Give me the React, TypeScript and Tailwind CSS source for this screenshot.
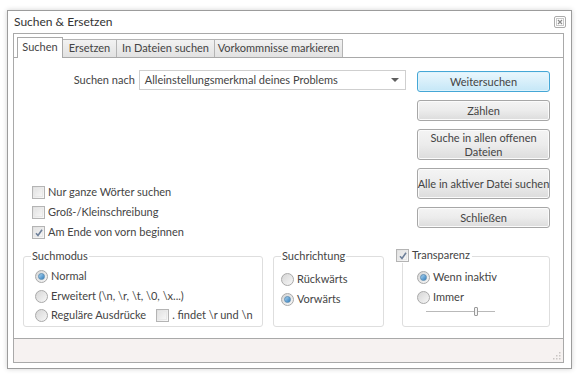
import React from 'react'

const font = { fontFamily: 'Lato, "Liberation Sans", sans-serif' }

function Checkbox({ checked }: { checked?: boolean }) {
  return (
    <span className="relative inline-flex h-[13px] w-[13px] shrink-0 items-center justify-center border border-[#b4b4b4] bg-gradient-to-br from-[#dedede] to-[#fafafa]">
      <span className="h-[9px] w-[9px] border border-[#e8e8e8] bg-gradient-to-br from-[#e4e4e4] to-[#f6f6f6]" />
      {checked && (
        <svg className="absolute left-[1px] top-[1px]" width="10" height="10" viewBox="0 0 10 10">
          <path d="M2 5.2 L4 7.5 L8 1.8" fill="none" stroke="#6d7f99" strokeWidth="1.6" />
        </svg>
      )}
    </span>
  )
}

function Radio({ checked }: { checked?: boolean }) {
  return (
    <span className="inline-flex h-[13px] w-[13px] shrink-0 items-center justify-center rounded-full border border-[#a9a9a9] bg-gradient-to-br from-[#d6d6d6] to-[#f7f7f7]">
      {checked && (
        <span className="h-[7px] w-[7px] rounded-full border border-[#5d8fb5] bg-gradient-to-br from-[#a9d4f0] to-[#2f7fbf]" />
      )}
    </span>
  )
}

function Btn({ children, primary, h }: { children: React.ReactNode; primary?: boolean; h: string }) {
  return (
    <div
      className={`flex w-[133px] items-center justify-center rounded-[3px] border text-center leading-[14px] ${h} ${
        primary
          ? 'border-[#45a7d6] bg-gradient-to-b from-[#eaf7fd] to-[#c5e7f7] shadow-[inset_0_0_0_1px_#dff3fc]'
          : 'border-[#a7a7a7] bg-gradient-to-b from-[#f4f4f4] via-[#ececec] to-[#dcdcdc] shadow-[inset_0_0_0_1px_#fbfbfb]'
      }`}
    >
      {children}
    </div>
  )
}

function Option({ children, checked, radio }: { children: React.ReactNode; checked?: boolean; radio?: boolean }) {
  return (
    <div className="flex h-[20px] items-center gap-[3px]">
      {radio ? <Radio checked={checked} /> : <Checkbox checked={checked} />}
      <span>{children}</span>
    </div>
  )
}

export default function App() {
  const tabs = [
    { label: 'Ersetzen', w: 'w-[54px]' },
    { label: 'In Dateien suchen', w: 'w-[98px]' },
    { label: 'Vorkommnisse markieren', w: 'w-[128px]' },
  ]

  return (
    <div className="h-[375px] w-[584px] overflow-hidden whitespace-nowrap bg-white pl-[7px] pt-[10px] text-[11px] text-[#444]" style={font}>
      <div className="flex h-[359px] w-[565px] flex-col border border-[#9c9c9c] bg-white shadow-[0_0_5px_rgba(0,0,0,0.18)]">
        {/* title bar */}
        <div className="flex h-[22px] items-center justify-between pl-[6px] pr-[5px]">
          <span className="text-[12px] text-[#333]">Suchen &amp; Ersetzen</span>
          <span className="flex h-[12px] w-[12px] items-center justify-center rounded-[2px] border border-[#ababab]">
            <svg width="8" height="8" viewBox="0 0 8 8">
              <rect x="0.5" y="0.5" width="7" height="7" fill="none" stroke="#c8c8c8" />
              <path d="M2 2 L6 6 M6 2 L2 6" stroke="#8a8a8a" strokeWidth="1.2" />
            </svg>
          </span>
        </div>

        {/* inner frame */}
        <div className="mb-[5px] ml-[5px] mr-[7px] flex flex-1 flex-col border border-[#a9a9a9]">
          {/* tabs */}
          <div className="flex h-[23px] items-end pl-[3px]">
            <div className="relative z-10 mb-[-1px] flex h-[21px] w-[46px] items-center justify-center border border-b-0 border-[#a9a9a9] bg-white pb-[1px]">
              Suchen
            </div>
            {tabs.map((t) => (
              <div
                key={t.label}
                className={`flex h-[18px] ${t.w} items-center justify-center border border-l-0 border-b-0 border-[#b4b4b4] bg-gradient-to-b from-[#f2f2f2] to-[#e2e2e2]`}
              >
                {t.label}
              </div>
            ))}
          </div>

          {/* pane */}
          <div className="flex flex-1 flex-col border-y border-[#a9a9a9] bg-white">
            <div className="flex h-[183px]">
              <div className="flex w-[392px] flex-col">
                <div className="mt-[12px] flex h-[20px] items-center">
                  <span className="ml-[51px] w-[70px] text-right">Suchen nach</span>
                  <div className="ml-[4px] flex h-[20px] w-[268px] items-center justify-between border border-[#cfcfcf] pl-[5px] pr-[5px]">
                    <span>Alleinstellungsmerkmal deines Problems</span>
                    <svg width="9" height="5" viewBox="0 0 9 5">
                      <path d="M0 0 H8 L4 4 Z" fill="#5e5e5e" />
                    </svg>
                  </div>
                </div>
                <div className="mt-auto mb-[-1px] ml-[18px] flex flex-col">
                  <Option>Nur ganze Wörter suchen</Option>
                  <Option>Groß-/Kleinschreibung</Option>
                  <Option checked>Am Ende von vorn beginnen</Option>
                </div>
              </div>
              <div className="ml-[11px] mt-[13px] flex flex-col gap-[8px]">
                <Btn primary h="h-[21px]">Weitersuchen</Btn>
                <Btn h="h-[21px]">Zählen</Btn>
                <Btn h="h-[31px]">
                  Suche in allen offenen
                  <br />
                  Dateien
                </Btn>
                <Btn h="h-[31px]">Alle in aktiver Datei suchen</Btn>
                <Btn h="h-[21px]">Schließen</Btn>
              </div>
            </div>

            {/* group boxes */}
            <div className="ml-[9px] mt-[15px] flex items-start">
              <div className="relative h-[71px] w-[240px] rounded-[3px] border border-[#dedede]">
                <span className="absolute left-[7px] top-[-9px] bg-white px-[1px] leading-[16px]">Suchmodus</span>
                <div className="ml-[11px] mt-[9px] flex flex-col">
                  <div className="h-[20px]">
                    <Option radio checked>Normal</Option>
                  </div>
                  <Option radio>Erweitert (\n, \r, \t, \0, \x...)</Option>
                  <div className="flex h-[19px] items-center">
                    <Option radio>Reguläre Ausdrücke</Option>
                    <span className="ml-[10px] flex items-center gap-[3px]">
                      <Checkbox />
                      <span>. findet \r und \n</span>
                    </span>
                  </div>
                </div>
              </div>

              <div className="relative ml-[10px] h-[71px] w-[111px] rounded-[3px] border border-[#dedede]">
                <span className="absolute left-[7px] top-[-9px] bg-white px-[1px] leading-[16px]">Suchrichtung</span>
                <div className="ml-[7px] mt-[12px] flex flex-col">
                  <Option radio>Rückwärts</Option>
                  <Option radio checked>Vorwärts</Option>
                </div>
              </div>

              <div className="relative ml-[18px] h-[71px] w-[148px] rounded-[3px] border border-[#dedede]">
                <span className="absolute left-[-7px] top-[-10px] flex items-center gap-[3px] bg-white pr-[2px] leading-[16px]">
                  <Checkbox checked />
                  <span>Transparenz</span>
                </span>
                <div className="ml-[14px] mt-[10px] flex flex-col">
                  <Option radio checked>Wenn inaktiv</Option>
                  <Option radio>Immer</Option>
                  <div className="relative ml-[9px] mt-[4px] h-[1px] w-[69px] bg-[#b9b9b9]">
                    <span className="absolute left-[48px] top-[-4px] h-[9px] w-[4px] rounded-[1px] border border-[#9a9a9a] bg-[#f4f4f4]" />
                  </div>
                </div>
              </div>
            </div>
          </div>

          {/* status bar */}
          <div className="flex h-[23px] items-end justify-end bg-[#f6f2f1] pb-[2px] pr-[2px]">
            <svg width="10" height="10" viewBox="0 0 10 10">
              {[
                [8, 2],
                [8, 5],
                [5, 5],
                [8, 8],
                [5, 8],
                [2, 8],
              ].map(([x, y]) => (
                <rect key={`${x}-${y}`} x={x} y={y} width="1.5" height="1.5" fill="#c9c5c4" />
              ))}
            </svg>
          </div>
        </div>
      </div>
    </div>
  )
}
